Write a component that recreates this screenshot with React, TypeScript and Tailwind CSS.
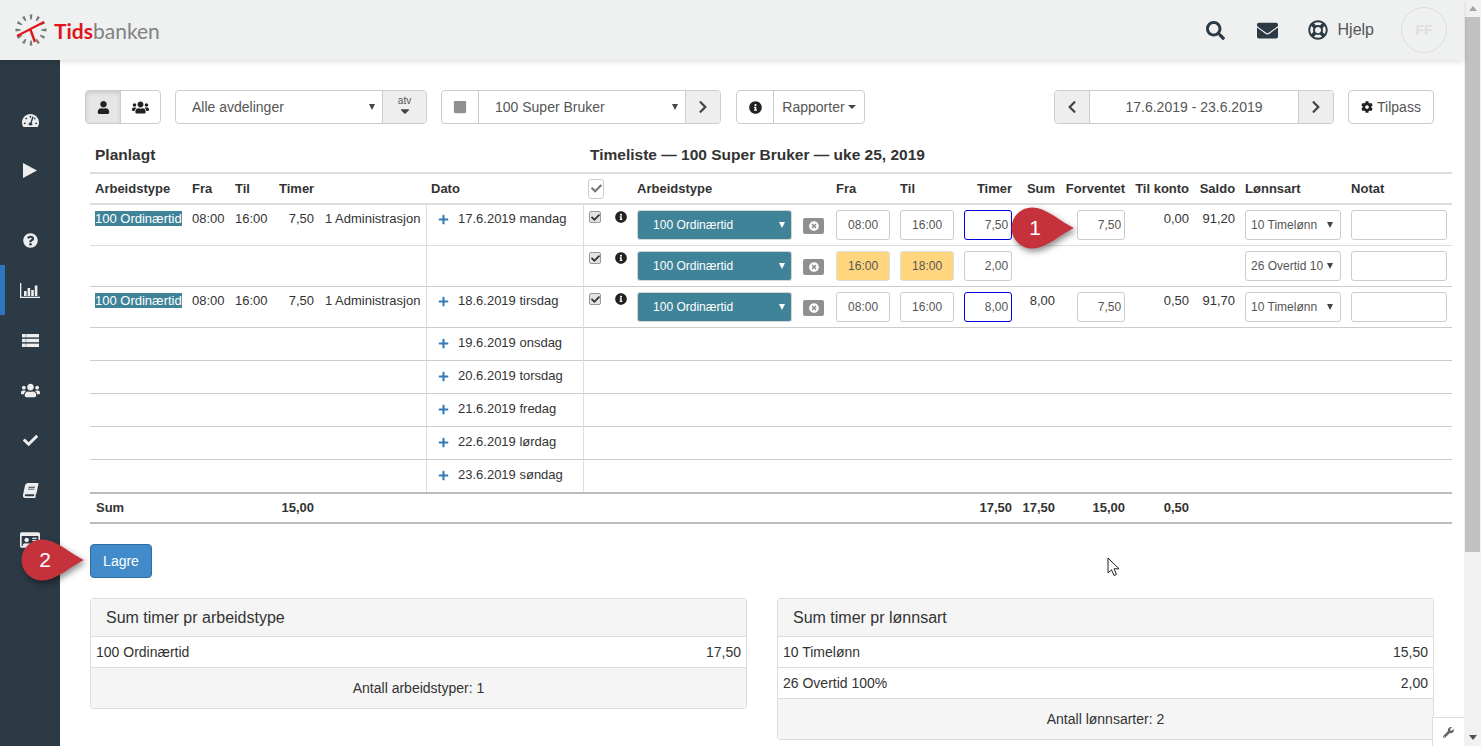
import React from 'react';
import {
  FaUser, FaUsers, FaChevronLeft, FaChevronRight, FaInfoCircle, FaCog, FaTachometerAlt,
  FaQuestionCircle, FaCheck, FaBook, FaRegIdCard, FaSearch, FaEnvelope,
  FaRegLifeRing, FaPlus, FaWrench, FaTimesCircle, FaStop, FaCaretDown,
} from 'react-icons/fa';

const Logo: React.FC = () => (
  <svg width="32" height="32" viewBox="0 0 32 32" className="shrink-0">
    {Array.from({ length: 12 }).map((_, i) => (
      <polygon key={i} points="14.6,0.5 17.4,0.5 16.7,5.5 15.3,5.5" fill="#77787b" transform={`rotate(${i * 30} 16 16)`} />
    ))}
    <path d="M2 22 L29 8" stroke="#e2141c" strokeWidth="2" fill="none" />
    <path d="M15 14.5 L20 28" stroke="#e2141c" strokeWidth="2.4" fill="none" />
  </svg>
);

const Pin: React.FC<{ n: string; className: string }> = ({ n, className }) => (
  <div className={`absolute z-20 w-[64px] h-[42px] ${className}`}>
    <svg width="64" height="42" viewBox="0 0 64 42" className="drop-shadow-[2px_3px_3px_rgba(0,0,0,0.45)]">
      <path d="M21 0.5 C35 0.5 47 13 63 21 C47 29 35 41.5 21 41.5 A20.5 20.5 0 0 1 21 0.5 Z" fill="#c5323b" />
    </svg>
    <span className="absolute left-[4px] top-[6px] w-[40px] text-center text-[21px] leading-[30px] text-white">{n}</span>
  </div>
);

const Check: React.FC = () => (
  <span className="mt-px flex w-[12px] h-[12px] items-center justify-center rounded-[2px] border border-[#999] bg-[#e3e3e3]">
    <FaCheck className="text-[9px] text-[#333]" />
  </span>
);

const Sel: React.FC<{ children: React.ReactNode; className?: string }> = ({ children, className = '' }) => (
  <div className={`flex h-[30px] items-center rounded-[3px] border border-[#ccc] bg-white pl-[5px] pr-[7px] text-[12px] text-[#555] ${className}`}>
    <span className="flex-1 overflow-hidden whitespace-nowrap">{children}</span>
    <span className="ml-[4px] h-0 w-0 border-x-[3.5px] border-t-[6px] border-x-transparent border-t-[#444]" />
  </div>
);

const Inp: React.FC<{ v?: string; className?: string }> = ({ v = '', className = '' }) => (
  <input
    readOnly
    value={v}
    className={`block h-[30px] rounded-[3px] border px-[3px] text-[12px] text-[#555] outline-none ${className}`}
  />
);

const td = 'align-top px-[5px] pt-[5px] pb-0 text-[13px] leading-[18px] text-[#333]';
const head = 'px-[5px] text-left text-[13px] font-bold whitespace-nowrap text-[#333]';

const WorkRow: React.FC<{
  planned?: boolean;
  date?: string;
  from: string;
  to: string;
  hours: string;
  sum?: string;
  expected?: string;
  account?: string;
  balance?: string;
  wage: string;
  warn?: boolean;
  blue?: boolean;
  line: string;
}> = ({ planned, date, from, to, hours, sum, expected, account, balance, wage, warn, blue, line }) => {
  const b = `${td} border-b ${line}`;
  return (
    <tr className="h-[41px]">
      <td className={b}>{planned && <span className="bg-[#3f8399] text-white">100 Ordinærtid</span>}</td>
      <td className={b}>{planned && '08:00'}</td>
      <td className={b}>{planned && '16:00'}</td>
      <td className={`${b} text-right`}>{planned && '7,50'}</td>
      <td className={`${b} whitespace-nowrap !pl-[6px] !pr-0`}>{planned && '1 Administrasjon'}</td>
      <td className={`${b} border-l border-l-[#ddd]`}>
        {date && (
          <span className="flex items-center whitespace-nowrap pl-[6px]">
            <FaPlus className="mr-[9px] text-[11px] text-[#337ab7]" />
            {date}
          </span>
        )}
      </td>
      <td className={`${b} border-l border-l-[#ddd]`}><Check /></td>
      <td className={b}><FaInfoCircle className="mt-px text-[12px] text-[#222]" /></td>
      <td className={b}>
        <div className="flex h-[30px] items-center rounded-[3px] border border-[#d5d5d5] bg-[#3f8399] pl-[15px] pr-[6px] text-[12px] text-white">
          <span className="flex-1">100 Ordinærtid</span>
          <span className="h-0 w-0 border-x-[3.5px] border-t-[6px] border-x-transparent border-t-white" />
        </div>
      </td>
      <td className={b}>
        <span className="ml-[1px] mt-[8px] flex h-[16px] w-[21px] items-center justify-center rounded-[2px] bg-[#8f8f8f]">
          <FaTimesCircle className="text-[10px] text-white" />
        </span>
      </td>
      <td className={b}><Inp v={from} className={`w-[54px] text-center ${warn ? 'border-[#ddd] bg-[#ffd67e]' : 'border-[#ccc] bg-white'}`} /></td>
      <td className={b}><Inp v={to} className={`w-[54px] text-center ${warn ? 'border-[#ddd] bg-[#ffd67e]' : 'border-[#ccc] bg-white'}`} /></td>
      <td className={b}><Inp v={hours} className={`w-[48px] text-right ${blue ? 'border-[#0000e0]' : 'border-[#ccc]'}`} /></td>
      <td className={`${b} text-right`}>{sum}</td>
      <td className={b}>{expected && <Inp v={expected} className="ml-auto w-[48px] border-[#ccc] pr-[3px] text-right" />}</td>
      <td className={`${b} text-right`}>{account}</td>
      <td className={`${b} text-right`}>{balance}</td>
      <td className={b}><Sel>{wage}</Sel></td>
      <td className={b}><Inp className="w-[96px] border-[#ccc]" /></td>
    </tr>
  );
};

const DayRow: React.FC<{ date: string; last?: boolean }> = ({ date, last }) => {
  const b = `align-top pt-[6px] text-[13px] leading-[18px] text-[#333] ${last ? '' : 'border-b border-[#ccc]'}`;
  return (
    <tr className={last ? 'h-[32px]' : 'h-[33px]'}>
      <td colSpan={5} className={b} />
      <td className={`${b} border-l border-l-[#ddd] px-[5px]`}>
        <span className="flex items-center whitespace-nowrap pl-[6px]">
          <FaPlus className="mr-[9px] text-[11px] text-[#337ab7]" />
          {date}
        </span>
      </td>
      <td colSpan={13} className={`${b} border-l border-l-[#ddd]`} />
    </tr>
  );
};

const Panel: React.FC<{ title: string; rows: [string, string][]; foot: string }> = ({ title, rows, foot }) => (
  <div className="self-start rounded-[3px] border border-[#ddd] text-[14px] text-[#333]">
    <div className="flex h-[38px] items-center border-b border-[#ddd] bg-[#f5f5f5] px-[15px] text-[16px]">{title}</div>
    {rows.map(([a, b]) => (
      <div key={a} className="flex h-[31px] items-center justify-between border-b border-[#ddd] px-[5px]">
        <span>{a}</span>
        <span>{b}</span>
      </div>
    ))}
    <div className="flex h-[40px] items-center justify-center bg-[#f5f5f5] pt-[1px] text-[14px]">{foot}</div>
  </div>
);

const navItem = 'flex h-[50px] items-center justify-center text-[#eee] text-[17px]';

export default function App() {
  return (
    <div className="relative flex h-[746px] w-[1481px] overflow-hidden bg-white font-['Liberation_Sans',Arial,sans-serif] text-[#333]">
      <div className="flex min-w-0 flex-1 flex-col">
        <header className="relative z-10 flex h-[60px] shrink-0 items-center bg-[#eff0f0] pl-[15px] pr-[17px] shadow-[0_2px_5px_rgba(0,0,0,0.12)]">
          <Logo />
          <span className="ml-[7px] font-['Lato',sans-serif] text-[21px] leading-none">
            <span className="font-bold text-[#e2141c]">Tids</span>
            <span className="text-[#808285]">banken</span>
          </span>
          <div className="ml-auto flex items-center text-[#2c3a45]">
            <FaSearch className="-ml-[1px] text-[19px]" />
            <FaEnvelope className="ml-[32px] text-[21px]" />
            <FaRegLifeRing className="ml-[30px] text-[20px]" />
            <span className="ml-[10px] text-[16px] text-[#555]">Hjelp</span>
            <span className="ml-[27px] flex h-[46px] w-[46px] items-center justify-center rounded-full border border-[#ddd] text-[14px] font-bold text-[#e0e0e0]">FF</span>
          </div>
        </header>

        <div className="flex min-h-0 flex-1">
          <nav className="w-[60px] shrink-0 bg-[#2c3a45] pt-[35px]">
            <div className={navItem}><FaTachometerAlt /></div>
            <div className={navItem}>
              <svg width="14" height="15" viewBox="0 0 14 15"><polygon points="0,0 14,7.5 0,15" fill="#eee" /></svg>
            </div>
            <div className={`${navItem} mt-[20px]`}><FaQuestionCircle className="text-[15px]" /></div>
            <div className={`${navItem} border-l-[5px] border-[#2f75c0] pr-[5px]`}>
              <svg width="20" height="15" viewBox="0 0 20 15" fill="#eee">
                <rect x="0" y="0" width="1.3" height="15" />
                <rect x="0" y="13.7" width="20" height="1.3" />
                <rect x="4" y="8" width="2.6" height="5" />
                <rect x="7.6" y="5" width="2.6" height="8" />
                <rect x="11.2" y="7" width="2.6" height="6" />
                <rect x="14.8" y="2.5" width="2.6" height="10.5" />
              </svg>
            </div>
            <div className={navItem}>
              <svg width="17" height="13" viewBox="0 0 17 13" fill="#eee">
                <rect x="0" y="0" width="17" height="3.4" />
                <rect x="0" y="4.8" width="17" height="3.4" />
                <rect x="0" y="9.6" width="17" height="3.4" />
                <rect x="3.6" y="0" width="0.7" height="13" fill="#2c3a45" opacity="0.5" />
              </svg>
            </div>
            <div className={navItem}><FaUsers className="text-[19px]" /></div>
            <div className={navItem}><FaCheck className="text-[15px]" /></div>
            <div className={navItem}><FaBook className="-skew-x-12 text-[15px]" /></div>
            <div className={navItem}><FaRegIdCard className="text-[20px]" /></div>
          </nav>

          <main className="min-w-0 flex-1 pl-[30px] pr-[12px] pt-[30px]">
            <div className="-ml-[5px] mr-[18px] flex h-[34px] text-[14px] text-[#555]">
              <div className="flex rounded-[4px] border border-[#ccc] text-[#222]">
                <span className="flex w-[35px] items-center justify-center rounded-l-[3px] border-r border-[#ccc] bg-[#e6e6e6] shadow-[inset_0_2px_4px_rgba(0,0,0,0.12)]"><FaUser className="text-[13px]" /></span>
                <span className="flex w-[39px] items-center justify-center"><FaUsers className="text-[17px]" /></span>
              </div>

              <div className="ml-[14px] flex w-[252px] rounded-[4px] border border-[#ccc]">
                <span className="flex flex-1 items-center pl-[16px] pr-[7px]">
                  <span className="flex-1">Alle avdelinger</span>
                  <span className="h-0 w-0 border-x-[3.5px] border-t-[6px] border-x-transparent border-t-[#444]" />
                </span>
                <span className="flex w-[44px] flex-col items-center justify-center rounded-r-[3px] border-l border-[#ccc] bg-[#eee] text-[10px] leading-[9px]">
                  atv
                  <FaCaretDown className="-mt-[1px] text-[14px] text-[#444]" />
                </span>
              </div>

              <div className="ml-[14px] flex w-[280px] rounded-[4px] border border-[#ccc]">
                <span className="flex w-[37px] items-center justify-center border-r border-[#ccc]"><FaStop className="text-[14px] text-[#8f8f8f]" /></span>
                <span className="flex flex-1 items-center pl-[16px] pr-[7px]">
                  <span className="flex-1">100 Super Bruker</span>
                  <span className="h-0 w-0 border-x-[3.5px] border-t-[6px] border-x-transparent border-t-[#444]" />
                </span>
                <span className="flex w-[35px] items-center justify-center rounded-r-[3px] border-l border-[#ccc] bg-[#eee]"><FaChevronRight className="text-[14px] text-[#444]" /></span>
              </div>

              <div className="ml-[15px] flex w-[129px] rounded-[4px] border border-[#ccc]">
                <span className="flex w-[37px] items-center justify-center border-r border-[#ccc]"><FaInfoCircle className="text-[13px] text-[#222]" /></span>
                <span className="flex flex-1 items-center justify-center whitespace-nowrap">
                  Rapporter
                  <span className="ml-[3px] h-0 w-0 border-x-[4px] border-t-[4px] border-x-transparent border-t-[#444]" />
                </span>
              </div>

              <div className="ml-auto flex w-[280px] rounded-[4px] border border-[#ccc]">
                <span className="flex w-[35px] items-center justify-center rounded-l-[3px] border-r border-[#ccc] bg-[#eee]"><FaChevronLeft className="text-[14px] text-[#444]" /></span>
                <span className="flex flex-1 items-center justify-center">17.6.2019 - 23.6.2019</span>
                <span className="flex w-[35px] items-center justify-center rounded-r-[3px] border-l border-[#ccc] bg-[#eee]"><FaChevronRight className="text-[14px] text-[#444]" /></span>
              </div>

              <div className="ml-[14px] flex w-[86px] items-center justify-center rounded-[4px] border border-[#ccc]">
                <FaCog className="mr-[4px] text-[12px] text-[#222]" />
                Tilpass
              </div>
            </div>

            <table className="w-[1362px] table-fixed border-separate border-spacing-0">
              <colgroup>
                {[97, 43, 44, 45, 107, 157, 27, 22, 165, 34, 64, 64, 58, 43, 70, 64, 46, 106, 106].map((w, i) => (
                  <col key={i} style={{ width: w }} />
                ))}
              </colgroup>
              <thead>
                <tr className="h-[48px]">
                  <th colSpan={6} className="px-[5px] pb-[8px] align-bottom text-left text-[15.5px] font-bold leading-[18px]">Planlagt</th>
                  <th colSpan={13} className="whitespace-nowrap px-[7px] pb-[8px] align-bottom text-left text-[15.5px] font-bold leading-[18px]">Timeliste — 100 Super Bruker — uke 25, 2019</th>
                </tr>
                <tr className="h-[33px] [&>th]:border-y-2 [&>th]:border-[#ddd]">
                  <th className={head}>Arbeidstype</th>
                  <th className={head}>Fra</th>
                  <th className={head}>Til</th>
                  <th className={head}>Timer</th>
                  <th className={head} />
                  <th className={head}>Dato</th>
                  <th className="px-[5px]">
                    <span className="flex h-[20px] w-[16px] items-center justify-center rounded-[3px] border border-[#ccc]">
                      <FaCheck className="text-[11px] text-[#777]" />
                    </span>
                  </th>
                  <th className={head} />
                  <th className={head}>Arbeidstype</th>
                  <th className={head} />
                  <th className={head}>Fra</th>
                  <th className={head}>Til</th>
                  <th className={`${head} !text-right`}>Timer</th>
                  <th className={`${head} !text-right`}>Sum</th>
                  <th className={`${head} !text-right`}>Forventet</th>
                  <th className={`${head} !text-right`}>Til konto</th>
                  <th className={`${head} !text-right`}>Saldo</th>
                  <th className={head}>Lønnsart</th>
                  <th className={head}>Notat</th>
                </tr>
              </thead>
              <tbody>
                <WorkRow planned date="17.6.2019 mandag" from="08:00" to="16:00" hours="7,50" blue expected="7,50" account="0,00" balance="91,20" wage="10 Timelønn" line="border-[#ddd]" />
                <WorkRow from="16:00" to="18:00" hours="2,00" warn wage="26 Overtid 100%" line="border-[#ccc]" />
                <WorkRow planned date="18.6.2019 tirsdag" from="08:00" to="16:00" hours="8,00" blue sum="8,00" expected="7,50" account="0,50" balance="91,70" wage="10 Timelønn" line="border-[#ccc]" />
                <DayRow date="19.6.2019 onsdag" />
                <DayRow date="20.6.2019 torsdag" />
                <DayRow date="21.6.2019 fredag" />
                <DayRow date="22.6.2019 lørdag" />
                <DayRow date="23.6.2019 søndag" last />
              </tbody>
              <tfoot>
                <tr className="h-[32px] text-[13px] font-bold [&>td]:border-y-2 [&>td]:border-[#bbb] [&>td]:px-[5px]">
                  <td className="!pl-[6px]">Sum</td>
                  <td colSpan={3} className="text-right">15,00</td>
                  <td colSpan={8} />
                  <td className="text-right">17,50</td>
                  <td className="text-right">17,50</td>
                  <td className="text-right">15,00</td>
                  <td className="text-right">0,50</td>
                  <td colSpan={3} />
                </tr>
              </tfoot>
            </table>

            <button className="mt-[20px] block h-[34px] w-[62px] rounded-[4px] border border-[#2e6da4] bg-[#428bca] text-[14px] text-white">Lagre</button>

            <div className="mr-[18px] mt-[20px] grid grid-cols-2 gap-[30px]">
              <Panel title="Sum timer pr arbeidstype" rows={[['100 Ordinærtid', '17,50']]} foot="Antall arbeidstyper: 1" />
              <Panel title="Sum timer pr lønnsart" rows={[['10 Timelønn', '15,50'], ['26 Overtid 100%', '2,00']]} foot="Antall lønnsarter: 2" />
            </div>
          </main>
        </div>
      </div>

      <div className="flex w-[17px] shrink-0 flex-col items-center bg-[#f1f1f1]">
        <span className="mt-[6px] h-0 w-0 border-x-[4px] border-b-[5px] border-x-transparent border-b-[#a3a3a3]" />
        <span className="mt-[6px] h-[535px] w-[15px] bg-[#c1c1c1]" />
        <span className="mb-[6px] mt-auto h-0 w-0 border-x-[4px] border-t-[5px] border-x-transparent border-t-[#505050]" />
      </div>

      <Pin n="1" className="left-[1011px] top-[207px]" />
      <Pin n="2" className="left-[21px] top-[539px]" />

      <svg width="14" height="21" viewBox="0 0 14 21" className="absolute left-[1107px] top-[557px] z-20">
        <path d="M1 1 L1 16 L4.5 12.8 L7 18.5 L9.5 17.4 L7 11.8 L12 11.8 Z" fill="#fff" stroke="#222" strokeWidth="1" />
      </svg>

      <div className="absolute bottom-0 left-[1432px] z-10 flex h-[29px] w-[32px] items-center justify-center border-l border-t border-[#ddd] bg-white">
        <FaWrench className="text-[11px] text-[#666]" />
      </div>
    </div>
  );
}
